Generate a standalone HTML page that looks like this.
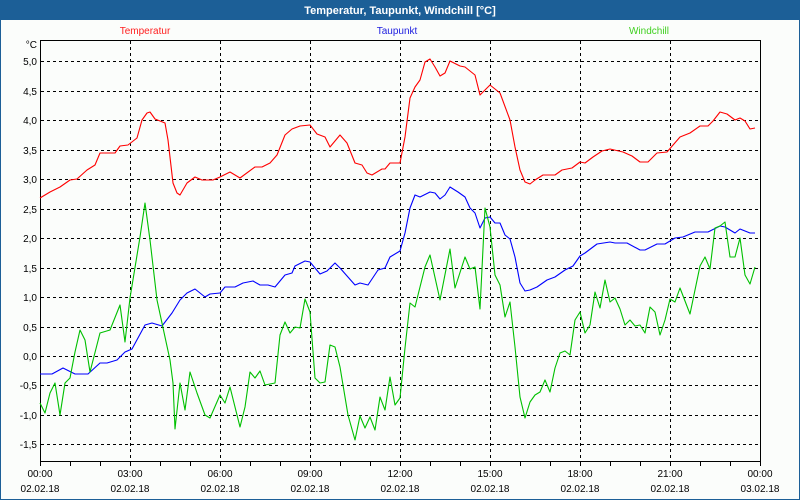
<!DOCTYPE html>
<html><head><meta charset="utf-8"><style>
html,body{margin:0;padding:0;}
body{width:800px;height:500px;overflow:hidden;background:#fbfdfb;font-family:"Liberation Sans",sans-serif;}
</style></head><body>
<svg width="800" height="500" xmlns="http://www.w3.org/2000/svg" style="display:block">
<rect x="0" y="0" width="800" height="500" fill="#1c5f97"/>
<rect x="1" y="20" width="798" height="479" fill="#fbfdfb"/>
<text x="400" y="14" text-anchor="middle" font-family="Liberation Sans" font-size="11" font-weight="bold" fill="#fff">Temperatur, Taupunkt, Windchill [°C]</text>
<g font-family="Liberation Sans" font-size="10" text-anchor="middle">
<text x="145" y="34" fill="#ff2020">Temperatur</text>
<text x="397" y="34" fill="#2020e0">Taupunkt</text>
<text x="649" y="34" fill="#40d020">Windchill</text>
</g>
<g stroke="#000" stroke-width="1" stroke-dasharray="3,3" shape-rendering="crispEdges">
<line x1="41" y1="61.5" x2="760" y2="61.5"/><line x1="41" y1="91.5" x2="760" y2="91.5"/>
<line x1="41" y1="120.5" x2="760" y2="120.5"/><line x1="41" y1="150.5" x2="760" y2="150.5"/>
<line x1="41" y1="179.5" x2="760" y2="179.5"/><line x1="41" y1="209.5" x2="760" y2="209.5"/>
<line x1="41" y1="238.5" x2="760" y2="238.5"/><line x1="41" y1="268.5" x2="760" y2="268.5"/>
<line x1="41" y1="297.5" x2="760" y2="297.5"/><line x1="41" y1="327.5" x2="760" y2="327.5"/>
<line x1="41" y1="356.5" x2="760" y2="356.5"/><line x1="41" y1="385.5" x2="760" y2="385.5"/>
<line x1="41" y1="415.5" x2="760" y2="415.5"/><line x1="41" y1="444.5" x2="760" y2="444.5"/>
<line x1="130.5" y1="41" x2="130.5" y2="461"/><line x1="220.5" y1="41" x2="220.5" y2="461"/>
<line x1="310.5" y1="41" x2="310.5" y2="461"/><line x1="400.5" y1="41" x2="400.5" y2="461"/>
<line x1="490.5" y1="41" x2="490.5" y2="461"/><line x1="580.5" y1="41" x2="580.5" y2="461"/>
<line x1="670.5" y1="41" x2="670.5" y2="461"/>
</g>
<rect x="40.5" y="40.5" width="720" height="421" fill="none" stroke="#000" stroke-width="1" shape-rendering="crispEdges"/>
<g stroke="#000" stroke-width="1" shape-rendering="crispEdges">
<line x1="40.5" y1="462" x2="40.5" y2="466"/><line x1="70.5" y1="462" x2="70.5" y2="466"/><line x1="100.5" y1="462" x2="100.5" y2="466"/><line x1="130.5" y1="462" x2="130.5" y2="466"/><line x1="160.5" y1="462" x2="160.5" y2="466"/><line x1="190.5" y1="462" x2="190.5" y2="466"/><line x1="220.5" y1="462" x2="220.5" y2="466"/><line x1="250.5" y1="462" x2="250.5" y2="466"/><line x1="280.5" y1="462" x2="280.5" y2="466"/><line x1="310.5" y1="462" x2="310.5" y2="466"/><line x1="340.5" y1="462" x2="340.5" y2="466"/><line x1="370.5" y1="462" x2="370.5" y2="466"/><line x1="400.5" y1="462" x2="400.5" y2="466"/><line x1="430.5" y1="462" x2="430.5" y2="466"/><line x1="460.5" y1="462" x2="460.5" y2="466"/><line x1="490.5" y1="462" x2="490.5" y2="466"/><line x1="520.5" y1="462" x2="520.5" y2="466"/><line x1="550.5" y1="462" x2="550.5" y2="466"/><line x1="580.5" y1="462" x2="580.5" y2="466"/><line x1="610.5" y1="462" x2="610.5" y2="466"/><line x1="640.5" y1="462" x2="640.5" y2="466"/><line x1="670.5" y1="462" x2="670.5" y2="466"/><line x1="700.5" y1="462" x2="700.5" y2="466"/><line x1="730.5" y1="462" x2="730.5" y2="466"/><line x1="760.5" y1="462" x2="760.5" y2="466"/>
</g>
<g font-family="Liberation Sans" font-size="10" fill="#000" text-anchor="end">
<text x="37" y="48">°C</text>
<text x="37" y="65">5,0</text><text x="37" y="95">4,5</text><text x="37" y="124">4,0</text><text x="37" y="154">3,5</text>
<text x="37" y="183">3,0</text><text x="37" y="213">2,5</text><text x="37" y="242">2,0</text><text x="37" y="272">1,5</text>
<text x="37" y="301">1,0</text><text x="37" y="331">0,5</text><text x="37" y="360">0,0</text><text x="37" y="389">-0,5</text>
<text x="37" y="419">-1,0</text><text x="37" y="448">-1,5</text>
</g>
<g font-family="Liberation Sans" font-size="10" fill="#000" text-anchor="middle">
<text x="40" y="477">00:00</text><text x="130" y="477">03:00</text><text x="220" y="477">06:00</text><text x="310" y="477">09:00</text><text x="400" y="477">12:00</text><text x="490" y="477">15:00</text><text x="580" y="477">18:00</text><text x="670" y="477">21:00</text><text x="760" y="477">00:00</text>
<text x="40" y="492">02.02.18</text><text x="130" y="492">02.02.18</text><text x="220" y="492">02.02.18</text><text x="310" y="492">02.02.18</text><text x="400" y="492">02.02.18</text><text x="490" y="492">02.02.18</text><text x="580" y="492">02.02.18</text><text x="670" y="492">02.02.18</text><text x="760" y="492">03.02.18</text>
</g>
<g fill="none" stroke-width="1.1" stroke-linejoin="round">
<polyline stroke="#ff0000" points="40,198 50,192 60,187 70,180 77,179 87,170 95,165 100,153 115,153 120,146 128,145 137,138 142,120 147,113 150,112 155,119 165,123 168,140 173,183 177,193 180,195 187,183 195,177 202,180 213,180 220,177 230,172 240,178 255,167 262,167 270,163 277,155 285,135 292,129 300,126 310,125 317,134 325,137 330,147 340,135 347,143 355,163 362,165 367,173 372,175 382,169 385,169 390,163 400,163 405,137 410,98 415,87 420,80 425,62 430,59 435,67 440,76 445,73 450,61 460,66 465,67 475,75 480,95 485,90 490,85 500,93 510,120 515,147 520,170 525,182 530,184 535,180 543,175 555,175 562,170 572,168 580,162 585,163 593,157 602,151 610,149 623,152 632,156 640,162 648,162 657,153 667,152 680,137 690,133 700,126 708,126 713,121 720,112 727,114 735,120 740,118 745,121 750,129 755,128"/>
<polyline stroke="#0000ff" points="40,374 52,374 63,368 75,374 88,374 100,363 107,363 117,360 125,352 132,349 145,325 152,323 162,326 172,313 180,300 187,293 195,289 205,297 210,294 220,293 225,287 235,287 243,283 253,281 260,285 268,285 275,287 285,275 292,273 295,266 305,261 310,262 320,274 327,271 335,263 340,268 355,285 360,283 368,285 378,270 385,268 390,257 400,251 405,233 410,208 415,195 420,197 430,192 435,193 440,199 445,195 450,187 458,192 465,197 470,208 475,213 480,228 485,218 490,217 495,223 500,223 505,235 510,239 515,257 520,283 525,291 530,290 537,287 547,280 555,277 565,270 573,266 580,256 585,253 597,244 610,242 615,243 627,243 640,250 645,250 657,244 665,244 675,238 683,237 695,232 708,232 720,226 725,227 735,233 740,229 750,233 755,233"/>
<polyline stroke="#00c000" points="40,403 45,413 50,393 55,383 60,415 65,383 70,378 75,352 80,330 85,340 90,372 100,333 110,330 120,305 125,342 130,298 140,237 145,203 150,240 157,300 165,337 170,360 173,383 175,429 180,383 185,410 190,372 197,393 205,415 210,418 220,395 225,403 230,387 240,427 245,407 250,372 255,378 260,371 265,385 275,383 280,335 285,322 290,333 295,327 300,328 305,299 310,312 315,378 320,383 325,382 330,345 335,347 340,367 348,415 355,440 360,416 365,428 370,417 375,430 380,397 385,410 390,377 395,405 400,398 405,348 410,303 415,307 425,267 430,255 440,300 450,249 455,288 465,257 470,269 475,267 480,309 485,208 490,227 495,275 500,285 505,317 510,302 515,347 520,397 525,418 530,402 535,395 540,392 545,380 550,392 555,368 560,353 565,351 570,355 575,320 580,312 585,333 590,325 595,292 600,308 605,280 610,302 615,298 620,309 625,325 630,320 635,326 640,325 645,333 650,307 655,312 660,335 665,320 670,299 675,302 680,288 690,314 700,266 705,257 710,269 715,228 720,226 725,222 730,257 735,257 740,238 745,275 750,284 755,267"/>
</g>
</svg>
</body></html>
